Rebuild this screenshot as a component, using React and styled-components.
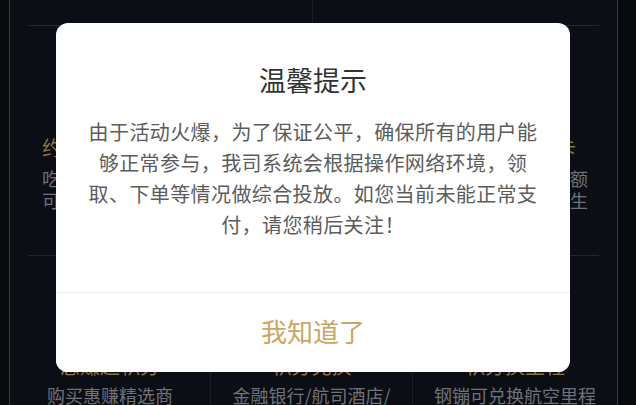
import React from "react";
import styled, { createGlobalStyle } from "styled-components";

const Global = createGlobalStyle`
  html, body { margin: 0; padding: 0; background: #08090d; }
  body { font-family: "Noto Sans CJK SC", "Noto Sans", sans-serif; }
  * { box-sizing: border-box; }
`;

const Page = styled.div`
  position: relative;
  width: 636px;
  height: 405px;
  overflow: hidden;
  background: #08090d;
`;

const Frame = styled.div`
  margin: 0 18px 0 9px;
  height: 405px;
  background: #0b0e14;
  border-left: 1px solid #4a3c24;
  border-right: 1px solid #3e3b26;
  display: flex;
  flex-direction: column;
`;

const Row = styled.div`
  display: grid;
  grid-template-columns: ${(p) => p.$cols};
  height: ${(p) => p.$h};
`;

const Cell = styled.div`
  border-left: ${(p) => (p.$divider ? "1px solid #1c1f27" : "none")};
  display: flex;
  flex-direction: column;
  align-items: ${(p) => (p.$center ? "center" : "flex-start")};
  padding: ${(p) => p.$pad || "0"};
  overflow: hidden;
`;

const Rule = styled.div`
  height: 1px;
  margin: 0 18px;
  background: #23262e;
  flex: none;
`;

const CardTitle = styled.div`
  font-size: 20px;
  line-height: 28px;
  color: #8c7446;
  white-space: nowrap;
`;

const CardDesc = styled.div`
  font-size: 18px;
  line-height: 22px;
  color: #6f7278;
  margin-top: ${(p) => p.$mt || "0"};
  white-space: ${(p) => (p.$wrap ? "normal" : "nowrap")};
  width: ${(p) => p.$w || "auto"};
  text-align: center;
  word-break: break-all;
`;

const Mask = styled.div`
  position: absolute;
  left: 56px;
  top: 23px;
  width: 514px;
  height: 349px;
  background: #ffffff;
  border-radius: 12px;
  display: flex;
  flex-direction: column;
  overflow: hidden;
`;

const Title = styled.h2`
  margin: 38px 0 0;
  font-size: 27px;
  line-height: 38px;
  font-weight: 400;
  color: #333333;
  text-align: center;
`;

const Body = styled.p`
  flex: 1;
  margin: 17px 0 0;
  padding: 0 24px;
  font-size: 20px;
  line-height: 31px;
  letter-spacing: 0.4px;
  color: #5c5c5c;
  text-align: center;
`;

const Footer = styled.button`
  flex: none;
  height: 80px;
  border: none;
  border-top: 1px solid #ededed;
  background: #ffffff;
  font-family: inherit;
  font-size: 26px;
  color: #caa661;
  padding: 0 0 4px;
  cursor: pointer;
`;

export default function App() {
  return (
    <>
      <Global />
      <Page>
        <Frame>
          <Row $cols="302px 1fr" $h="25px">
            <Cell />
            <Cell $divider />
          </Row>
          <Rule />
          <Row $cols="302px 1fr" $h="229px">
            <Cell $pad="108px 0 0 32px">
              <CardTitle>约惠赚好物专享</CardTitle>
              <CardDesc $mt="5px">吃喝玩乐全场景优惠</CardDesc>
              <CardDesc>可叠加使用更划算</CardDesc>
            </Cell>
            <Cell $pad="108px 0 0 24px">
              <CardTitle>每日签到可领取专属优惠卡</CardTitle>
              <CardDesc $mt="5px">会员专享多项权益领取均不限额</CardDesc>
              <CardDesc>畅享品质生活开启美好精彩人生</CardDesc>
            </Cell>
          </Row>
          <Rule />
          <Row $cols="200px 202px 1fr" $h="149px">
            <Cell $center $pad="96px 0 0">
              <CardTitle>惠赚超积分</CardTitle>
              <CardDesc $mt="4px" $wrap $w="130px">购买惠赚精选商品赚积分</CardDesc>
            </Cell>
            <Cell $divider $center $pad="96px 0 0">
              <CardTitle>积分兑换</CardTitle>
              <CardDesc $mt="4px" $wrap $w="166px">金融银行/航司酒店/商城积分</CardDesc>
            </Cell>
            <Cell $divider $center $pad="96px 0 0">
              <CardTitle>积分换里程</CardTitle>
              <CardDesc $mt="4px" $wrap $w="164px">钢镚可兑换航空里程轻松出行</CardDesc>
            </Cell>
          </Row>
        </Frame>
        <Mask role="dialog">
          <Title>温馨提示</Title>
          <Body>
            由于活动火爆，为了保证公平，确保所有的用户能
            <br />
            够正常参与，我司系统会根据操作网络环境，领
            <br />
            取、下单等情况做综合投放。如您当前未能正常支
            <br />
            付，请您稍后关注！
          </Body>
          <Footer>我知道了</Footer>
        </Mask>
      </Page>
    </>
  );
}
